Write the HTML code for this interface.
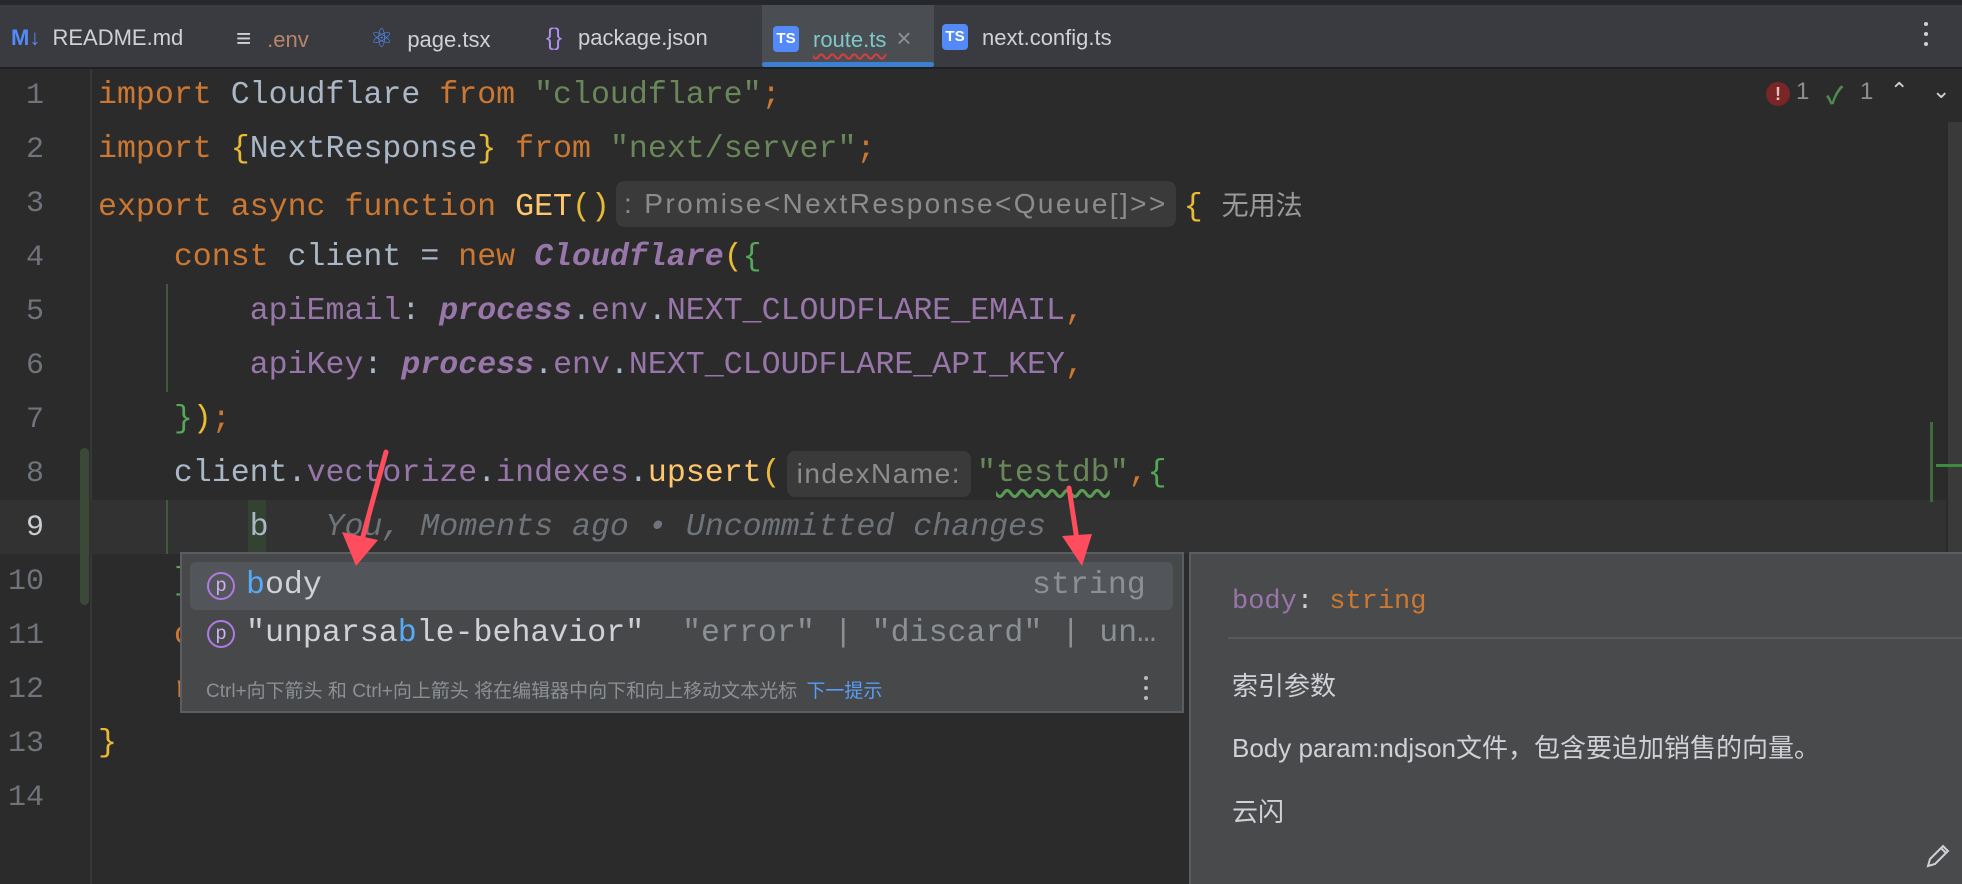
<!DOCTYPE html>
<html><head><meta charset="utf-8"><style>
*{margin:0;padding:0;box-sizing:border-box}
body{width:1962px;height:884px;background:#2b2b2b;overflow:hidden;position:relative;font-family:"Liberation Sans","Noto Sans CJK SC",sans-serif}
.abs{position:absolute}
.code{position:absolute;left:98px;font-family:"Liberation Mono","Noto Sans CJK SC",monospace;font-size:31.6px;line-height:54px;height:54px;white-space:pre;color:#a9b7c6}
.ln{position:absolute;left:0;width:44px;text-align:right;font-family:"Liberation Mono",monospace;font-size:30px;line-height:54px;color:#6f737a}
.k{color:#cc7832}.s{color:#6a8759}.p{color:#9876aa}.y{color:#e8ba36}.g{color:#54a857}.pi{color:#9876aa;font-style:italic;font-weight:bold}.ci{color:#9876aa;font-style:italic;font-weight:bold}
.hint{display:inline-block;font-family:"Liberation Sans",sans-serif;font-size:28px;color:#8c8c8c;background:#3a3a3b;border-radius:8px;line-height:46px;vertical-align:top;margin-top:4px;padding:0 10px}
.tab{position:absolute;top:5px;height:62px;line-height:66px;font-size:22px;color:#cfd1d6}
.ts{display:inline-block;width:26px;height:26px;background:#548af7;color:#fff;font-size:15px;font-weight:bold;line-height:26px;text-align:center;border-radius:4px;vertical-align:middle;margin-top:-4px}
</style></head><body>
<div class="abs" style="left:0;top:0;width:1962px;height:5px;background:#26282b"></div>
<div class="abs" style="left:0;top:5px;width:1962px;height:62px;background:#393b40"></div>
<div class="abs" style="left:762px;top:5px;width:172px;height:62px;background:#4a4d52"></div>
<div class="abs" style="left:762px;top:62px;width:172px;height:5px;background:#3d7fd1;border-radius:3px"></div>
<div class="abs" style="left:0;top:67px;width:1962px;height:2px;background:#1f2023"></div>
<div class="tab" style="left:11px"><span style="color:#548af7;font-weight:bold">M↓</span> <span style="margin-left:6px">README.md</span></div>
<div class="tab" style="left:236px"><span style="color:#cfd1d6;font-size:26px">≡</span><span style="margin-left:16px;color:#b8856a">.env</span></div>
<div class="tab" style="left:370px"><span style="color:#548af7;font-size:26px">⚛</span><span style="margin-left:14px">page.tsx</span></div>
<div class="tab" style="left:546px"><span style="color:#b48ef0;font-size:24px">{}</span><span style="margin-left:16px">package.json</span></div>
<div class="tab" style="left:773px"><span class="ts">TS</span><span style="margin-left:14px;color:#7fc8c8;text-decoration:underline wavy #d04040;text-underline-offset:6px">route.ts</span><span style="margin-left:10px;color:#8c8f94;font-size:26px">×</span></div>
<div class="tab" style="left:942px"><span class="ts">TS</span><span style="margin-left:14px">next.config.ts</span></div>
<div class="abs" style="left:1924px;top:22px;width:4px;height:4px;background:#cfd1d6;border-radius:2px;box-shadow:0 10px 0 #cfd1d6,0 20px 0 #cfd1d6"></div>

<div class="abs" style="left:90px;top:69px;width:2px;height:815px;background:#35373a"></div>
<div class="abs" style="left:0;top:500px;width:1946px;height:54px;background:#323232"></div>
<div class="abs" style="left:80px;top:448px;width:9px;height:157px;background:#3a4a37;border-radius:5px"></div>
<div class="abs" style="left:166px;top:284px;width:2px;height:108px;background:#3f5a3d"></div>
<div class="abs" style="left:166px;top:500px;width:2px;height:54px;background:#3f5a3d"></div>
<div class="abs" style="left:248px;top:500px;width:18px;height:54px;background:#344232"></div>

<div class="ln" style="top:69px">1</div><div class="ln" style="top:123px">2</div><div class="ln" style="top:177px">3</div><div class="ln" style="top:231px">4</div><div class="ln" style="top:285px">5</div><div class="ln" style="top:339px">6</div><div class="ln" style="top:393px">7</div><div class="ln" style="top:447px">8</div><div class="ln" style="top:501px;color:#c9ccd1">9</div><div class="ln" style="top:555px">10</div><div class="ln" style="top:609px">11</div><div class="ln" style="top:663px">12</div><div class="ln" style="top:717px">13</div><div class="ln" style="top:771px">14</div>

<div class="code" style="top:69px"><span class="k">import</span> Cloudflare <span class="k">from</span> <span class="s">"cloudflare"</span><span class="k">;</span></div>
<div class="code" style="top:123px"><span class="k">import</span> <span class="y">{</span>NextResponse<span class="y">}</span> <span class="k">from</span> <span class="s">"next/server"</span><span class="k">;</span></div>
<div class="code" style="top:177px"><span class="k">export async function</span> <span style="color:#ffc66d">GET</span><span class="y">()</span><span class="hint" style="margin-left:6px;margin-right:8px;letter-spacing:2.4px;padding:0 8px">: Promise&lt;NextResponse&lt;Queue[]&gt;&gt;</span><span class="y">{</span> <span style="font-family:'Noto Sans CJK SC',sans-serif;font-size:27px;color:#9a9a9a">无用法</span></div>
<div class="code" style="top:231px">    <span class="k">const</span> client = <span class="k">new</span> <span class="ci">Cloudflare</span><span class="y">(</span><span class="g">{</span></div>
<div class="code" style="top:285px">        <span class="p">apiEmail</span>: <span class="pi">process</span>.<span class="p">env</span>.<span class="p">NEXT_CLOUDFLARE_EMAIL</span><span class="k">,</span></div>
<div class="code" style="top:339px">        <span class="p">apiKey</span>: <span class="pi">process</span>.<span class="p">env</span>.<span class="p">NEXT_CLOUDFLARE_API_KEY</span><span class="k">,</span></div>
<div class="code" style="top:393px">    <span class="g">}</span><span class="y">)</span><span class="k">;</span></div>
<div class="code" style="top:447px">    client.<span class="p">vectorize</span>.<span class="p">indexes</span>.<span style="color:#ffc66d">upsert</span><span class="y">(</span><span class="hint" style="margin-left:6px;margin-right:6px;padding:0 10px;letter-spacing:1.5px">indexName:</span><span class="s">"<span style="text-decoration:underline wavy #5a9a55;text-underline-offset:8px">testdb</span>"</span><span class="k">,</span><span class="g">{</span></div>
<div class="code" style="top:501px">        b   <span style="color:#6f737a;font-style:italic">You, Moments ago • Uncommitted changes</span></div>
<div class="code" style="top:555px">    <span class="g">}</span></div>
<div class="code" style="top:609px">    <span class="k">c</span></div>
<div class="code" style="top:663px">    <span class="k">r</span></div>
<div class="code" style="top:717px"><span class="y">}</span></div>

<div class="abs" style="left:1766px;top:82px;width:24px;height:24px;border-radius:12px;background:#7a2626;color:#e0c0c0;font-size:18px;font-weight:bold;text-align:center;line-height:24px">!</div>
<div class="abs" style="left:1796px;top:78px;font-size:24px;color:#8c8f94">1</div>
<div class="abs" style="left:1826px;top:76px;font-size:24px;color:#4e8a4e;font-weight:bold">✓</div>
<div class="abs" style="left:1860px;top:78px;font-size:24px;color:#8c8f94">1</div>
<div class="abs" style="left:1890px;top:78px;font-size:22px;color:#cfd1d6">&#8963;</div>
<div class="abs" style="left:1932px;top:78px;font-size:22px;color:#cfd1d6">&#8964;</div>
<div class="abs" style="left:1948px;top:122px;width:14px;height:430px;background:#3a3a3a"></div>
<div class="abs" style="left:1930px;top:422px;width:3px;height:80px;background:#3d6b3d"></div>
<div class="abs" style="left:1936px;top:464px;width:26px;height:3px;background:#3d8b3d"></div>

<div class="abs" style="left:180px;top:552px;width:1004px;height:161px;background:#46484a;border:2px solid #5a5d61"></div>
<div class="abs" style="left:190px;top:562px;width:983px;height:48px;background:#52555a;border-radius:6px"></div>
<div class="abs" style="left:207px;top:572px;width:28px;height:28px;border:2px solid #b07ae0;border-radius:50%;color:#d0b0f0;font-size:19px;text-align:center;line-height:23px;font-family:'Liberation Sans'">p</div>
<div class="abs" style="left:207px;top:620px;width:28px;height:28px;border:2px solid #b07ae0;border-radius:50%;color:#d0b0f0;font-size:19px;text-align:center;line-height:23px;font-family:'Liberation Sans'">p</div>
<div class="code" style="left:246px;top:559px;font-size:31.6px;color:#cfd1d6"><span style="color:#57aaf7">b</span>ody</div>
<div class="code" style="left:1032px;top:559px;font-size:31.6px;color:#8c8f94">string</div>
<div class="code" style="left:246px;top:607px;font-size:31.6px;color:#cfd1d6">"unparsa<span style="color:#57aaf7">b</span>le-behavior"  <span style="color:#8c8f94">"error" | "discard" | un…</span></div>
<div class="abs" style="left:206px;top:676px;font-size:19px;color:#8c8f94;font-family:'Liberation Sans','Noto Sans CJK SC',sans-serif">Ctrl+向下箭头 和 Ctrl+向上箭头 将在编辑器中向下和向上移动文本光标 <span style="color:#589df6;margin-left:4px">下一提示</span></div>
<div class="abs" style="left:1144px;top:676px;width:4px;height:4px;background:#bbb;border-radius:2px;box-shadow:0 10px 0 #bbb,0 20px 0 #bbb"></div>

<div class="abs" style="left:1189px;top:552px;width:773px;height:332px;background:#494a4c;border-left:2px solid #5a5d61;border-top:2px solid #5a5d61"></div>
<div class="code" style="left:1232px;top:575px;font-size:27px;color:#cfd1d6"><span class="p">body</span>: <span class="k">string</span></div>
<div class="abs" style="left:1228px;top:637px;width:734px;height:2px;background:#58595c"></div>
<div class="abs" style="left:1232px;top:668px;font-size:26px;color:#cfd1d6;font-family:'Noto Sans CJK SC',sans-serif;line-height:34px">索引参数</div>
<div class="abs" style="left:1232px;top:731px;font-size:26px;color:#cfd1d6;font-family:'Liberation Sans','Noto Sans CJK SC',sans-serif;line-height:34px">Body param:ndjson文件，包含要追加销售的向量。</div>
<div class="abs" style="left:1232px;top:794px;font-size:26px;color:#cfd1d6;font-family:'Noto Sans CJK SC',sans-serif;line-height:34px">云闪</div>
<svg class="abs" style="left:1924px;top:842px" width="28" height="28" viewBox="0 0 28 28"><path d="M4 24 L6 17 L19 4 L24 9 L11 22 Z M17 6 L22 11" fill="none" stroke="#cfd1d6" stroke-width="2"/></svg>

<svg class="abs" style="left:0;top:0" width="1962" height="884">
<line x1="386" y1="452" x2="362" y2="540" stroke="#ff4d5e" stroke-width="5" stroke-linecap="round"/>
<polygon points="342,532 378,540 356,566" fill="#ff4d5e"/>
<line x1="1069" y1="488" x2="1077" y2="540" stroke="#ff4d5e" stroke-width="5" stroke-linecap="round"/>
<polygon points="1062,536 1092,534 1082,566" fill="#ff4d5e"/>
</svg>
</body></html>
